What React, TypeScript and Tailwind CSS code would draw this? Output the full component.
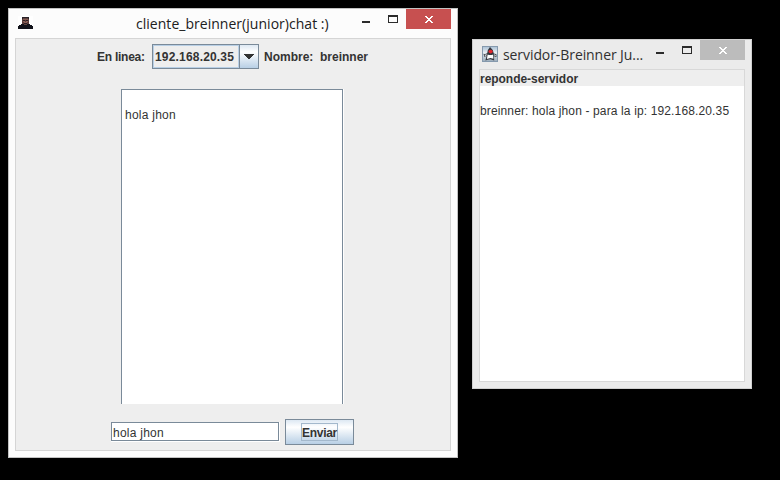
import type { ReactNode } from "react";

const sans = "font-['Liberation_Sans',Arial,sans-serif]";

function PortraitIcon() {
  return (
    <svg className="block h-[13px] w-[15px] shrink-0" viewBox="0 0 15 13" shapeRendering="crispEdges">
      <rect width="15" height="13" fill="#fff" />
      <path d="M4 1h7v1h0v6H4z" fill="#5a3c3a" />
      <path d="M4 1h7v2h-1v-1H5v1H4z" fill="#2a2228" />
      <path d="M5 2h5v1H5z" fill="#5d4240" />
      <path d="M5 3h5v1H5z" fill="#855c54" />
      <path d="M5 5h2v1H5zM8 5h2v1H8zM6 6h3v1H6z" fill="#8a6058" />
      <path d="M5 4h2v1H5zM8 4h2v1H8zM6 7h3v1H6z" fill="#2c2026" />
      <path d="M3 8h9v1h2v1h1v3H0v-3h1V9h2z" fill="#11121a" />
      <path d="M6 8h3v1H6z" fill="#61443f" />
    </svg>
  );
}

function DukeIcon() {
  return (
    <svg className="block size-4 shrink-0" viewBox="0 0 16 16">
      <defs>
        <linearGradient id="duke" x1="0" y1="0" x2="0" y2="1">
          <stop offset="0" stopColor="#a9bfd4" />
          <stop offset="0.4" stopColor="#e6edf2" />
          <stop offset="1" stopColor="#9aabba" />
        </linearGradient>
      </defs>
      <rect x="0.5" y="0.5" width="15" height="15" fill="url(#duke)" stroke="#8599ad" />
      <path d="M8 1 Q5.8 3 5.2 7.2 L2.8 8.2 L1.5 7.8 L2.2 10.8 L4.6 10 L3.4 14.4 L6.5 13.6 L8.5 13.2 L12.2 14.6 L12 10.2 L14.4 11 L14.4 8.2 L11.8 7.6 Q11 3 8 1Z" fill="#34363d" />
      <path d="M5.6 8.4 Q8.5 9.4 11.2 8.4 L11.4 12.8 L8.5 12 L4.9 13 Z" fill="#fbfcfc" />
      <path d="M2.8 8.8 L5 8.2 L4.4 9.5 L2.8 10Z M12.1 8.2 L13.8 8.9 L13.7 10.1 L12.2 9.5Z" fill="#f1f3f4" />
      <ellipse cx="8.6" cy="5.6" rx="2.1" ry="1.8" fill="#e3252b" />
    </svg>
  );
}

function WindowButtons({ closeClass }: { closeClass: string }) {
  return (
    <div className="flex shrink-0">
      <svg className="block h-5 w-[44px]" viewBox="0 0 44 20" shapeRendering="crispEdges">
        <path d="M0 12h8v2H0z" fill="#2b2b2b" />
        <path d="M26 6h10v8H26zM27 8v5h8V8z" fill="#2b2b2b" fillRule="evenodd" />
      </svg>
      <div className={`h-5 w-[45px] ${closeClass}`}>
        <svg className="block h-5 w-[45px]" viewBox="0 0 45 20" shapeRendering="crispEdges">
          <path d="M19 7h2v1h1v1h2V8h1V7h2v1h-1v1h-1v1h-1v1h1v1h1v1h1v1h-2v-1h-1v-1h-2v1h-1v1h-2v-1h1v-1h1v-1h1v-1h-1V9h-1V8h-1z" fill="#fff" />
        </svg>
      </div>
    </div>
  );
}

function Bold({ children, className }: { children: ReactNode; className: string }) {
  return <span className={`block shrink-0 whitespace-nowrap text-[12px] leading-[14px] font-bold text-[#333] ${className}`}>{children}</span>;
}

function ClientWindow() {
  return (
    <section className="absolute top-2 left-2 flex h-[450px] w-[450px] flex-col border border-[#c2c2c2] bg-[#fcfcfc] px-[6px] pb-[6px]">
      <header className="flex h-[29px] shrink-0">
        <div className="w-[121px] shrink-0 pt-[7px] pl-[3px]"><PortraitIcon /></div>
        <h1 className="w-[226px] shrink-0 whitespace-nowrap pt-[5px] font-['Open_Sans',sans-serif] text-[14px] leading-5 font-normal tracking-[0.03px] text-[#202020]">cliente_breinner(junior)chat :)</h1>
        <WindowButtons closeClass="bg-[#c75050]" />
      </header>
      <main className="flex min-h-0 flex-1 flex-col border border-[#d5d5d5] bg-[#eee]">
        <div className="flex h-[25px] shrink-0 mt-[5px] pl-[81px]">
          <Bold className="w-[55px] pt-[6px] tracking-[-0.25px]">En linea:</Bold>
          <div className="flex h-[25px] w-[107px] shrink-0 border border-[#7a8a99]">
            <div className="w-[86px] border border-[#b8cfe5] pt-1 pl-px">
              <Bold className="w-[82px] tracking-[0.18px]">192.168.20.35</Bold>
            </div>
            <div className="flex flex-1 items-center justify-center border-l border-[#7a8a99] bg-linear-to-b from-[#dde8f3] via-[#fff] via-30% to-[#b8cfe5]">
              <svg className="block h-[5px] w-[10px]" viewBox="0 0 10 5" shapeRendering="crispEdges"><path d="M0 0h10v1H9v1H8v1H7v1H6v1H4V4H3V3H2V2H1V1H0z" fill="#333" /></svg>
            </div>
          </div>
          <Bold className="ml-[5px] w-[56px] pt-[6px]">Nombre:</Bold>
          <Bold className="pt-[6px]">breinner</Bold>
        </div>
        <div className="mt-5 ml-[105px] flex h-[315px] w-[223px] shrink-0 border-r border-white">
          <div className="flex-1 border-t border-r border-l border-[#7a8a99] bg-white pt-[18px] pl-[3px] text-[12px] leading-[14px] tracking-[0.25px] text-[#333]">hola jhon</div>
        </div>
        <div className="mt-[15px] ml-[95px] flex h-[26px] shrink-0">
          <div className="mt-[3px] flex h-5 w-[169px] border-r border-b border-white">
            <div className="flex-1 border border-[#7a8a99] bg-white pt-[3px] pl-px text-[12px] leading-[14px] tracking-[0.25px] text-[#333]">hola jhon</div>
          </div>
          <button className="ml-[5px] flex h-[26px] w-[69px] justify-center border border-[#7a8a99] bg-linear-to-b from-[#dde8f3] via-[#fff] via-30% to-[#b8cfe5] pt-[3px]">
            <span className="flex h-[18px] w-[37px] justify-center border border-[#a3b8cc] pt-[2px] text-[12px] leading-[14px] font-bold tracking-[-0.3px] text-[#333]">Enviar</span>
          </button>
        </div>
      </main>
    </section>
  );
}

function ServerWindow() {
  return (
    <section className="absolute top-[39px] left-[472px] flex h-[350px] w-[280px] flex-col border border-[#d0d0d0] bg-[#ebebeb] px-[6px] pb-[6px]">
      <header className="flex h-[29px] shrink-0">
        <div className="w-6 shrink-0 pt-[6px] pl-[3px]"><DukeIcon /></div>
        <h1 className="w-[153px] shrink-0 whitespace-nowrap pt-[5px] font-['Open_Sans',sans-serif] text-[14px] leading-5 font-normal tracking-[-0.08px] text-[#303030]">servidor-Breinner Ju...</h1>
        <WindowButtons closeClass="bg-[#bcbcbc]" />
      </header>
      <main className="flex flex-1 flex-col border border-[#d8d8d8] bg-white">
        <div className="h-4 shrink-0 bg-[#eee] pt-[2px]"><Bold className="tracking-[-0.04px]">reponde-servidor</Bold></div>
        <p className="whitespace-nowrap pt-[18px] text-[12px] leading-[14px] tracking-[0.135px] text-[#333]">breinner: hola jhon - para la ip: 192.168.20.35</p>
      </main>
    </section>
  );
}

export default function App() {
  return (
    <div className={`relative h-[480px] w-[780px] overflow-hidden bg-black ${sans}`}>
      <ClientWindow />
      <ServerWindow />
    </div>
  );
}
